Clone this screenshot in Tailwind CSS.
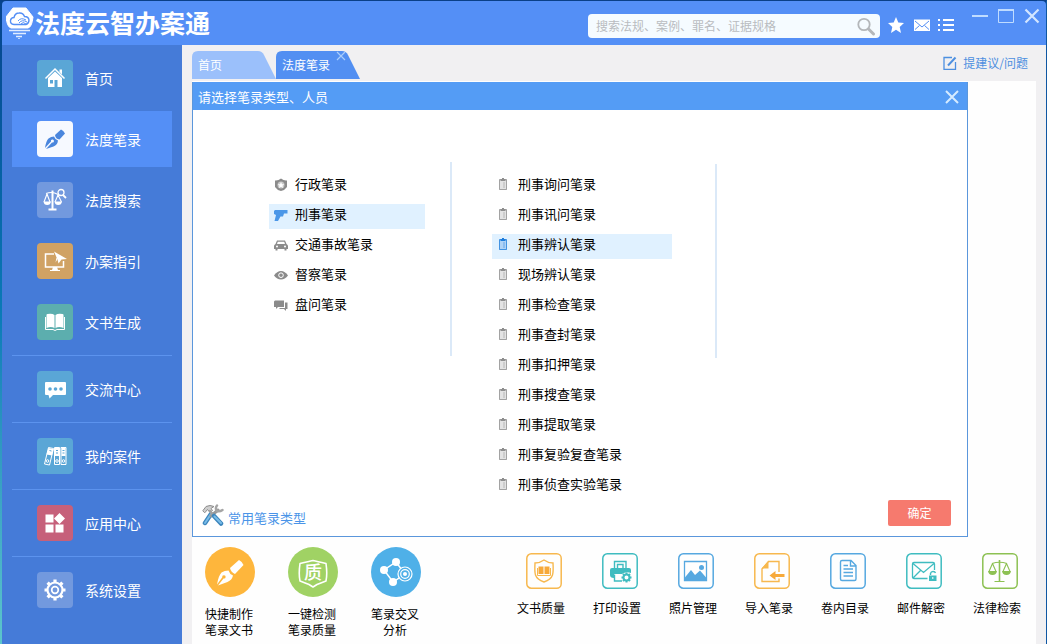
<!DOCTYPE html>
<html lang="zh-CN">
<head>
<meta charset="utf-8">
<meta name="viewport" content="width=device-width, initial-scale=1">
<title>法度云智办案通</title>
<script src="https://cdn.jsdelivr.net/npm/@tailwindcss/browser@4"></script>
</head>
<body class="min-h-screen bg-linear-to-b from-[#06428c] via-[#0b7cb8] to-[#5cc6cc] font-['Noto_Sans_CJK_SC',sans-serif] text-[13px] leading-4 text-black">
<svg class="hidden" aria-hidden="true">
  <symbol id="clipboard" viewBox="0 0 13 14">
    <path d="M2 2.500H10V13H2Z" fill="currentColor" fill-opacity=".25"/>
    <path d="M2.500 2.500H9.500V12.500H2.500Z" fill="none" stroke="currentColor" stroke-opacity=".75"/>
    <path d="M3.500 2H5V1H7V2H8.500V4H3.500Z" fill="currentColor"/>
    <path d="M6 6H8M6 8H8M6 10H8" stroke="currentColor" stroke-opacity=".5"/>
  </symbol>
</svg>
<div class="flex min-h-screen flex-col border-t border-r border-l-2 border-t-[#0a3f87] border-r-[#0f57a3] border-l-transparent bg-clip-padding">

  <!-- Title bar -->
  <header class="flex h-11 shrink-0 items-center rounded-t bg-[#548ff6] pr-1.5 pl-1 text-white">
    <svg class="h-8 w-7 shrink-0" viewBox="0 0 28 32" aria-hidden="true">
      <path d="M7 1H20L27 10Q26 20 22 21H5Q1 20 0 10Z" fill="#fff" stroke="#fff" stroke-linejoin="round"/>
      <path d="M8 17.500Q4 17 4.500 13.500Q5 10.500 8 10.500Q9 6 13 6Q17 5.500 18.500 9.500Q22.500 9.500 23 13Q23 16.500 20 17.500Z" fill="none" stroke="#548ff6" stroke-width="1.400"/>
      <path d="M12 14Q15 10 20 13M13 16Q16 12 21 15M15 17Q17 14 20 17" fill="none" stroke="#548ff6"/>
      <path d="M3 23.500H24M7 26.500H20M10 29.500H16" stroke="#e2edff" stroke-width="1.300"/>
      <path d="M12 31.500H14" stroke="#c0d7ff"/>
    </svg>
    <h1 class="pb-0.5 pl-px text-[25px] leading-8 font-bold whitespace-nowrap">法度云智办案通</h1>
    <form class="mt-1.5 ml-auto flex h-6 w-[292px] items-center rounded bg-[#f5fbff] pr-1 pl-2" role="search">
      <input type="text" aria-label="搜索" placeholder="搜索法规、案例、罪名、证据规格" class="min-w-0 flex-1 bg-transparent text-xs text-gray-700 outline-none placeholder:text-[#b9bcc0]">
      <button type="submit" aria-label="搜索" class="size-5">
        <svg viewBox="0 0 20 20" fill="none" stroke="#b4b7ba"><circle cx="8" cy="8.500" r="5.700" stroke-width="1.800"/><path d="M12.500 13L17.500 18" stroke-width="3" stroke-linecap="round"/></svg>
      </button>
    </form>
    <nav class="mt-1 ml-2 flex items-center gap-2" aria-label="快捷">
      <button type="button" aria-label="收藏"><svg class="size-4" viewBox="0 0 16 16" fill="#fff"><path d="M8 0L10.300 5.500L16 6L11.700 9.900L13 16L8 12.800L3 16L4.300 9.900L0 6L5.700 5.500Z"/></svg></button>
      <button type="button" aria-label="邮件" class="ml-0.5"><svg class="size-4" viewBox="0 0 16 16"><path d="M0 2.500H16V14H0Z" fill="#fff"/><path d="M1 4L8 10L15 4M1 12.500L5.500 8.500M15 12.500L10.500 8.500" fill="none" stroke="#548ff6"/></svg></button>
      <button type="button" aria-label="菜单"><svg class="size-4" viewBox="0 0 16 16" stroke="#fff" stroke-width="2"><path d="M0 3H2M0 8H2M0 13H2M5 3H16M5 8H16M5 13H16"/></svg></button>
    </nav>
    <div class="mb-3.5 ml-[18px] flex items-center gap-2.5">
      <button type="button" aria-label="最小化"><svg class="size-4" viewBox="0 0 16 16"><path d="M0 8H16" stroke="#c0dcff" stroke-width="2"/></svg></button>
      <button type="button" aria-label="最大化"><svg class="size-4" viewBox="0 0 16 16" fill="none" stroke="#c0dcff"><path d="M.5 1.500H15.500V14.500H.5Z"/><path d="M0 2H16" stroke-width="2"/></svg></button>
      <button type="button" aria-label="关闭"><svg class="size-4" viewBox="0 0 16 16" stroke="#d3e6ff" stroke-width="2.200"><path d="M1.500 1.500L14.500 14.500M14.500 1.500L1.500 14.500"/></svg></button>
    </div>
  </header>

  <div class="flex flex-1">
    <!-- Sidebar -->
    <nav class="flex w-[180px] shrink-0 flex-col gap-[5px] bg-[#457bd8] px-2.5 pt-[5px] text-sm text-white" aria-label="主导航">
      <a href="#" class="flex h-14 items-center gap-3 pl-[25px]">
        <span class="grid size-9 place-items-center rounded bg-[#5aa6d6]"><svg class="size-6" viewBox="0 0 24 24"><path d="M5 12L12 5.500L19 12V21H14.500V14H11.500V21H5Z" fill="#fff"/><path d="M2.500 12.500L12 3L21.500 12.500" fill="none" stroke="#fff" stroke-width="1.500"/><path d="M16.500 3.500H19V8.500L16.500 6Z" fill="#fff"/><path d="M7 14H10V17.500H7Z" fill="#5aa6d6"/></svg></span>首页</a>
      <a href="#" aria-current="page" class="flex h-14 items-center gap-3 bg-[#548ff6] pl-[25px]">
        <span class="grid size-9 place-items-center rounded bg-[#f6f9ff]"><svg class="size-6" viewBox="0 0 24 24" fill="#4a86dd"><path d="M12 8L18 2.500Q20.500 3.500 22 6.500L16.500 12.500Q12.500 12 12 8Z"/><path d="M11 9.500Q12 12.500 15 13.500Q14.500 18 10.500 19.500L3 22L9 15.500A1.500 1.500 0 1 0 8 14.500L2 21Q3 14 5.500 11.500Q8 9.500 11 9.500Z"/></svg></span>法度笔录</a>
      <a href="#" class="flex h-14 items-center gap-3 pl-[25px]">
        <span class="grid size-9 place-items-center rounded bg-[#7299de]"><svg class="size-6" viewBox="0 0 24 24" fill="none" stroke="#fff"><path d="M9.500 2.500V21" stroke-width="2"/><path d="M3 5.500Q9.500 3 15 6.500M4 6L1 14M4 6L7 14M15 7L12 14M15 7L18.500 14" stroke-width="1.100"/><path d="M.5 13.500H8Q7.500 17 4.200 17Q1 17 .5 13.500ZM11.500 13.500H19Q18.500 17 15.200 17Q12 17 11.500 13.500ZM5.500 20.500H13.500V22.500H5.500Z" fill="#fff" stroke="none"/><circle cx="18" cy="4.500" r="3" stroke-width="1.300"/><path d="M20 7L23 10" stroke-width="1.800"/></svg></span>法度搜索</a>
      <a href="#" class="flex h-14 items-center gap-3 pl-[25px]">
        <span class="grid size-9 place-items-center rounded bg-[#d0a264]"><svg class="size-6" viewBox="0 0 24 24"><path d="M11 5H2.500V18H20.500V12" fill="none" stroke="#fff" stroke-width="1.500"/><path d="M10 18H14L15 21H17V22H7V21H9Z" fill="#fff"/><path d="M11 2.500L24 10L18.500 10.500L15.500 14.500L14.500 10.500Z" fill="#fff"/><path d="M14.500 10L12.500 13.500L13.500 8.500" fill="#fff"/></svg></span>办案指引</a>
      <a href="#" class="flex h-14 items-center gap-3 pl-[25px]">
        <span class="grid size-9 place-items-center rounded bg-[#5caeae]"><svg class="size-6" viewBox="0 0 24 24" fill="#fff"><path d="M4.500 4Q9 3 11.500 5V18Q8 16 3.500 18V5Q3.500 4 4.500 4ZM19.500 4Q15 3 12.500 5V18Q16 16 20.500 18V5Q20.500 4 19.500 4Z"/><path d="M2.500 7V19.500H10Q12 21.500 14 19.500H21.500V7" fill="none" stroke="#fff"/></svg></span>文书生成</a>
      <hr class="border-[#5c93ee]">
      <a href="#" class="flex h-14 items-center gap-3 pl-[25px]">
        <span class="grid size-9 place-items-center rounded bg-[#5aa6d6]"><svg class="size-6" viewBox="0 0 24 24"><path d="M3 5H22Q23 5 23 6V17Q23 18 22 18H10L6.500 21.500L5.500 18H3Q2 18 2 17V6Q2 5 3 5Z" fill="#fff"/><g fill="#5aa6d6"><circle cx="7" cy="12" r="1.800"/><circle cx="12.500" cy="12" r="1.800"/><circle cx="18" cy="12" r="1.800"/></g></svg></span>交流中心</a>
      <hr class="border-[#5c93ee]">
      <a href="#" class="flex h-14 items-center gap-3 pl-[25px]">
        <span class="grid size-9 place-items-center rounded bg-[#5aa6d6]"><svg class="size-6" viewBox="0 0 24 24" fill="none" stroke="#fff"><path d="M5.500 3.500L10.500 4.500L6.500 21L1.500 20ZM11.500 3.500H16.500V20.500H11.500ZM18 3.500H23V20.500H18Z"/><path d="M5.500 4L10.500 5L9 11.500L3.500 10.500ZM12 4H16V12H12ZM18.500 4H22.500V12H18.500Z" fill="#fff" stroke="none"/><path d="M6.500 6.500L8.500 7M13 6.500H15M19.500 6.500H21.500M13 9H15M19.500 9H21.500" stroke="#5aa6d6"/><circle cx="4.500" cy="17" r="1.300"/><circle cx="14" cy="17" r="1.300"/><circle cx="20.500" cy="17" r="1.300"/></svg></span>我的案件</a>
      <hr class="border-[#5c93ee]">
      <a href="#" class="flex h-14 items-center gap-3 pl-[25px]">
        <span class="grid size-9 place-items-center rounded bg-[#c6607a]"><svg class="size-6" viewBox="0 0 24 24" fill="#fff"><path d="M2.500 3.500H10.500V11.500H2.500ZM2.500 13.500H10.500V21.500H2.500ZM12.500 13.500H20.500V21.500H12.500ZM16.500 2L22 7.500L16.500 13L11 7.500Z"/></svg></span>应用中心</a>
      <hr class="border-[#5c93ee]">
      <a href="#" class="flex h-14 items-center gap-3 pl-[25px]">
        <span class="grid size-9 place-items-center rounded bg-[#7299de]"><svg class="size-6" viewBox="0 0 24 24" fill="none" stroke="#fff"><circle cx="12" cy="12" r="7.500" stroke-width="2.200"/><circle cx="12" cy="12" r="3.300" stroke-width="1.700"/><path d="M12 1.500V4.500M12 19.500V22.500M1.500 12H4.500M19.500 12H22.500M4.600 4.600L6.500 6.500M17.500 17.500L19.400 19.400M4.600 19.400L6.500 17.500M17.500 6.500L19.400 4.600" stroke-width="3.200"/></svg></span>系统设置</a>
    </nav>

    <main class="flex min-w-0 flex-1 flex-col bg-[#f1f0f2] px-2.5 pt-1.5">
      <!-- Document tabs -->
      <div class="flex text-xs text-white">
        <a href="#" class="flex h-7 w-[84px] items-center bg-[#9bc0fb] pl-1.5 [clip-path:path('M0_6Q0_0_6_0H66Q70_0_72_4L84_28H0Z')]">首页</a>
        <div class="relative flex h-7 w-[84px] items-center bg-[#528ff2] pl-1.5 [clip-path:path('M0_6Q0_0_6_0H66Q70_0_72_4L84_28H0Z')]">
          <a href="#" aria-current="page">法度笔录</a>
          <button type="button" aria-label="关闭标签" class="absolute top-0 left-[60px]"><svg class="size-2.5" viewBox="0 0 10 10" stroke="#a9cdfb" stroke-width="1.200"><path d="M1 1L9 9M9 1L1 9"/></svg></button>
        </div>
        <a href="#" class="mr-2 ml-auto flex items-center gap-1.5 pb-1 text-[#4d8fe0]">
          <svg class="size-3.5" viewBox="0 0 14 14" fill="none" stroke="#4d8fe0"><path d="M12.500 6V13.300H1V1.500H9" stroke-width="1.300"/><path d="M5 9.500L12.500 1.500" stroke-width="2"/></svg>
          提建议/问题</a>
      </div>

      <div class="mt-0.5 flex flex-1 flex-col bg-[#fefefe] pt-px">
        <!-- Record type picker -->
        <section role="dialog" aria-labelledby="picker-title" class="mr-[68px] border border-t-0 border-[#5b97dc] bg-white">
          <div class="flex h-7 items-center justify-between bg-[#549cf5] pr-2 pl-[5px] text-white">
            <h2 id="picker-title" class="pt-px">请选择笔录类型、人员</h2>
            <button type="button" aria-label="关闭" class="pt-0.5"><svg class="size-3.5" viewBox="0 0 14 14" stroke="#d5ebff" stroke-width="2"><path d="M1 1L13 13M13 1L1 13"/></svg></button>
          </div>
          <div class="flex items-start pt-[52px] pl-[76px]">
            <ul class="flex w-[156px] flex-col gap-[5px] pt-3">
              <li><button type="button" class="flex h-[25px] w-full items-center gap-[7px] pb-1.5 pl-[5px]"><svg class="mt-0.5 size-3.5" viewBox="0 0 14 14"><path d="M1 2.500Q4 3 7 .5Q10 3 13 2.500V9Q11 12 7 13Q3 12 1 9Z" fill="#8b8b8b"/><circle cx="7" cy="7" r="3.500" fill="#c8c8c8"/><path d="M7 4L8 6.200L10.300 6.300L8.500 7.800L9 10L7 8.800L5 10L5.500 7.800L3.700 6.300L6 6.200Z" fill="#fff"/></svg>行政笔录</button></li>
              <li><button type="button" aria-pressed="true" class="flex h-[25px] w-full items-center gap-[7px] bg-[#e0f1ff] pb-1.5 pl-[5px]"><svg class="mt-0.5 size-3.5" viewBox="0 0 14 14" fill="#4b97e8"><path d="M0 3L1 2H13.500V5.500H10L9 8.500H6.500L4 13H.5L2 7L0 6Z"/></svg>刑事笔录</button></li>
              <li><button type="button" class="flex h-[25px] w-full items-center gap-[7px] pb-1.5 pl-[5px]"><svg class="mt-0.5 size-3.5" viewBox="0 0 14 14" fill="#8b8b8b"><path d="M3 2.500H11L12.500 6Q14 7 14 8V11H12.500V12.500H10.500V11H3.500V12.500H1.500V11H0V8Q0 7 1.500 6Z"/><path d="M3.800 3.700H10.200L11 6H3Z" fill="#fff"/><circle cx="3" cy="8.500" r="1" fill="#fff"/><circle cx="11" cy="8.500" r="1" fill="#fff"/></svg>交通事故笔录</button></li>
              <li><button type="button" class="flex h-[25px] w-full items-center gap-[7px] pb-1.5 pl-[5px]"><svg class="mt-0.5 size-3.5" viewBox="0 0 14 14"><path d="M0 7.500Q3 3 7 3Q11 3 14 7.500Q11 11.500 7 11.500Q3 11.500 0 7.500Z" fill="#8b8b8b"/><circle cx="7" cy="7.200" r="2.300" fill="none" stroke="#fff"/></svg>督察笔录</button></li>
              <li><button type="button" class="flex h-[25px] w-full items-center gap-[7px] pb-1.5 pl-[5px]"><svg class="mt-0.5 size-3.5" viewBox="0 0 14 14" fill="#8b8b8b"><path d="M1 2.500H10V9H4L2 11V9H0V3.500Z"/><path d="M11 4.500H13.500V11H12V13L10 11H5.500V10H11Z"/></svg>盘问笔录</button></li>
            </ul>
            <div class="ml-[25px] h-[194px] w-0.5 bg-[#dbe9f8]"></div>
            <ul class="ml-10 flex w-[180px] flex-col gap-[5px] pt-3 whitespace-nowrap">
              <li><button type="button" class="flex h-[25px] w-full items-center gap-2 pb-1.5 pl-[5px]"><svg class="h-3.5 w-[13px] text-[#8e8e8e]"><use href="#clipboard"/></svg>刑事询问笔录</button></li>
              <li><button type="button" class="flex h-[25px] w-full items-center gap-2 pb-1.5 pl-[5px]"><svg class="h-3.5 w-[13px] text-[#8e8e8e]"><use href="#clipboard"/></svg>刑事讯问笔录</button></li>
              <li><button type="button" aria-pressed="true" class="flex h-[25px] w-full items-center gap-2 bg-[#e0f1ff] pb-1.5 pl-[5px]"><svg class="h-3.5 w-[13px] text-[#1f7ddb]"><use href="#clipboard"/></svg>刑事辨认笔录</button></li>
              <li><button type="button" class="flex h-[25px] w-full items-center gap-2 pb-1.5 pl-[5px]"><svg class="h-3.5 w-[13px] text-[#8e8e8e]"><use href="#clipboard"/></svg>现场辨认笔录</button></li>
              <li><button type="button" class="flex h-[25px] w-full items-center gap-2 pb-1.5 pl-[5px]"><svg class="h-3.5 w-[13px] text-[#8e8e8e]"><use href="#clipboard"/></svg>刑事检查笔录</button></li>
              <li><button type="button" class="flex h-[25px] w-full items-center gap-2 pb-1.5 pl-[5px]"><svg class="h-3.5 w-[13px] text-[#8e8e8e]"><use href="#clipboard"/></svg>刑事查封笔录</button></li>
              <li><button type="button" class="flex h-[25px] w-full items-center gap-2 pb-1.5 pl-[5px]"><svg class="h-3.5 w-[13px] text-[#8e8e8e]"><use href="#clipboard"/></svg>刑事扣押笔录</button></li>
              <li><button type="button" class="flex h-[25px] w-full items-center gap-2 pb-1.5 pl-[5px]"><svg class="h-3.5 w-[13px] text-[#8e8e8e]"><use href="#clipboard"/></svg>刑事搜查笔录</button></li>
              <li><button type="button" class="flex h-[25px] w-full items-center gap-2 pb-1.5 pl-[5px]"><svg class="h-3.5 w-[13px] text-[#8e8e8e]"><use href="#clipboard"/></svg>刑事提取笔录</button></li>
              <li><button type="button" class="flex h-[25px] w-full items-center gap-2 pb-1.5 pl-[5px]"><svg class="h-3.5 w-[13px] text-[#8e8e8e]"><use href="#clipboard"/></svg>刑事复验复查笔录</button></li>
              <li><button type="button" class="flex h-[25px] w-full items-center gap-2 pb-1.5 pl-[5px]"><svg class="h-3.5 w-[13px] text-[#8e8e8e]"><use href="#clipboard"/></svg>刑事侦查实验笔录</button></li>
            </ul>
            <div class="mt-0.5 ml-[43px] h-[194px] w-0.5 bg-[#dbe9f8]"></div>
          </div>
          <div class="flex items-end justify-between pt-px pr-4 pb-2.5 pl-[9px]">
            <a href="#" class="flex items-center gap-1 text-[#4a94e8]">
              <svg class="size-[22px]" viewBox="0 0 22 22" fill="none" stroke-linecap="round"><path d="M9 10L3 19" stroke="#3d86bd" stroke-width="4.500"/><path d="M9 10L3 19" stroke="#79bce8" stroke-width="2"/><path d="M16 6L9 12" stroke="#9a9a9a" stroke-width="3"/><path d="M15 1.500Q13 4 14.500 6.500Q17 8.500 20.500 6" stroke="#a5a5a5" stroke-width="2.400"/><path d="M1 6.500L4 2.500Q8 .5 12 2.500L9 4.500L10.500 6.500L8 8.500L5.500 5.500L3 8.500Z" fill="#cfcfcf" stroke="#8e8e8e"/><path d="M8 7L12 12" stroke="#a0a0a0" stroke-width="2.500"/><path d="M12 12L19 19.500" stroke="#3d86bd" stroke-width="4.500"/><path d="M12.500 12.500L19 19" stroke="#79bce8" stroke-width="2"/></svg>
              <span class="pt-1.5">常用笔录类型</span></a>
            <button type="button" class="h-[26px] w-[63px] rounded-xs bg-[#f67a6e] text-xs text-white">确定</button>
          </div>
        </section>

        <!-- Shortcuts -->
        <div class="flex items-start justify-between pt-2.5 pr-[9px] pb-1.5 pl-[13px] text-xs">
          <div class="flex gap-[33px]">
            <a href="#" class="flex w-[50px] flex-col gap-[9px] leading-4">
              <svg class="size-[50px]" viewBox="0 0 50 50"><circle cx="25" cy="25" r="25" fill="#feb63c"/><g fill="#fff"><path d="M25 21L34 13Q37 14.500 38.500 18L30 27Q26 25.500 25 21Z"/><path d="M23.500 23.500Q24.500 27 28 28.500Q27 33 22.500 35L13 38.500L18.500 31.500A1.700 1.700 0 1 0 17.300 30.300L12 37.500Q13.500 28.500 16.500 25.500Q19.500 23.500 23.500 23.500Z"/></g></svg>
              <span class="w-12 text-center">快捷制作<br>笔录文书</span></a>
            <a href="#" class="flex w-[50px] flex-col gap-[9px] leading-4">
              <svg class="size-[50px]" viewBox="0 0 50 50"><circle cx="25" cy="25" r="25" fill="#a0d264"/><path d="M25 13.500Q29 14.500 38 16.500Q39.500 27 38 34L29 37.500L25 40L21 37.500L12 34Q10.500 27 12 16.500Q21 14.500 25 13.500Z" fill="none" stroke="#fff" stroke-width="1.600" stroke-linejoin="round"/><text x="25" y="32" font-size="18" text-anchor="middle" fill="#fff" font-weight="500">质</text></svg>
              <span class="w-12 text-center">一键检测<br>笔录质量</span></a>
            <a href="#" class="flex w-[50px] flex-col gap-[9px] leading-4">
              <svg class="size-[50px]" viewBox="0 0 50 50"><circle cx="25" cy="25" r="25" fill="#4fb0e8"/><path d="M34 27L25 15L13 23L22 35Z" fill="none" stroke="#fff" stroke-width="1.500"/><g fill="#fff"><circle cx="25" cy="15" r="4"/><circle cx="13" cy="23" r="4"/><circle cx="22" cy="35" r="4"/></g><circle cx="34" cy="27" r="7" fill="#4fb0e8" stroke="#fff" stroke-width="1.200"/><circle cx="34" cy="27" r="4.300" fill="none" stroke="#fff" stroke-width="1.200"/><circle cx="34" cy="27" r="2" fill="#fff"/></svg>
              <span class="w-12 text-center">笔录交叉<br>分析</span></a>
          </div>
          <div class="flex gap-[22px] pt-1.5">
            <a href="#" class="flex w-[54px] flex-col gap-[11px]">
              <svg class="size-9 self-center" viewBox="0 0 36 36" fill="none" stroke="#f7b84e"><rect x=".8" y=".8" width="34.400" height="34.400" rx="4.500" stroke-width="1.500"/><path d="M18 7Q22 10 27 10Q27.500 19 26.500 22Q25 26.500 18 29Q11 26.500 9.500 22Q8.500 19 9 10Q14 10 18 7Z" stroke-width="1.400"/><path d="M12.500 13.500H17.500V21H12.500ZM18.500 13.500H23.500V21H18.500Z" fill="#f7a93a" stroke="none"/><path d="M11.500 15V22.500H24.500V15"/></svg>
              文书质量</a>
            <a href="#" class="flex w-[54px] flex-col gap-[11px]">
              <svg class="size-9 self-center" viewBox="0 0 36 36" fill="none" stroke="#3fbcc0"><rect x=".8" y=".8" width="34.400" height="34.400" rx="4.500" stroke-width="1.500"/><path d="M12.500 15V8.500H24V15M15.500 15V11.500H21V15" stroke-width="1.400"/><path d="M10 15H27Q29 15 29 17V20Q24 18 20 21H12V25Q8 25 8 22V17Q8 15 10 15Z" fill="#3fbcc0" stroke="none"/><path d="M12.500 21.500V28H20" stroke-width="1.400"/><circle cx="24.500" cy="24.500" r="3" stroke-width="2"/><path d="M24.500 19.500V21M24.500 28V29.500M19.500 24.500H21M28 24.500H29.500M21 21L22 22M27 27L28 28M21 28L22 27M27 22L28 21" stroke-width="2"/></svg>
              打印设置</a>
            <a href="#" class="flex w-[54px] flex-col gap-[11px]">
              <svg class="size-9 self-center" viewBox="0 0 36 36" fill="none" stroke="#56a8e0"><rect x=".8" y=".8" width="34.400" height="34.400" rx="4.500" stroke-width="1.500"/><path d="M6.500 8.500H28.500V27.500H6.500Z" stroke-width="1.300"/><path d="M6.500 25L13 17L17 22L22 17.500L28.500 25V27.500H6.500Z" fill="#56a8e0" stroke="none"/><circle cx="23.500" cy="14.500" r="2.500" fill="#56a8e0" stroke="none"/></svg>
              照片管理</a>
            <a href="#" class="flex w-[54px] flex-col gap-[11px]">
              <svg class="size-9 self-center" viewBox="0 0 36 36" fill="none" stroke="#f7b84e"><rect x=".8" y=".8" width="34.400" height="34.400" rx="4.500" stroke-width="1.500"/><path d="M25 19V8.500H14.500L8 16V28.500H25V25.500" stroke-width="1.400"/><path d="M7.500 15.500L14.500 8V15.500Z" fill="#f7b84e" stroke="none"/><path d="M15.500 22.500L21.500 18V21H30.500V24H21.500V27Z" fill="#f7a93a" stroke="none"/></svg>
              导入笔录</a>
            <a href="#" class="flex w-[54px] flex-col gap-[11px]">
              <svg class="size-9 self-center" viewBox="0 0 36 36" fill="none" stroke="#56a8e0"><rect x=".8" y=".8" width="34.400" height="34.400" rx="4.500" stroke-width="1.500"/><path d="M12 7.500H21L26 12.500V26Q26 27.500 24.500 27.500H12Q10.500 27.500 10.500 26V9Q10.500 7.500 12 7.500ZM20.500 8V13H25.500" stroke-width="1.400"/><path d="M13.500 12.500H18M13.500 16H23M13.500 19.500H23M13.500 23H23" stroke-width="1.400"/></svg>
              卷内目录</a>
            <a href="#" class="flex w-[54px] flex-col gap-[11px]">
              <svg class="size-9 self-center" viewBox="0 0 36 36" fill="none" stroke="#3fbcc0"><rect x=".8" y=".8" width="34.400" height="34.400" rx="4.500" stroke-width="1.500"/><path d="M21.500 25.500H8Q6.500 25.500 6.500 24V11Q6.500 9.500 8 9.500H27Q28.500 9.500 28.500 11V17M7 10.500L17.500 19.500L28 10.500M7 25L14.500 17.500" stroke-width="1.300"/><path d="M23 22.500H30.500V28H23Z" fill="#3fbcc0" stroke="none"/><path d="M24.500 22V20.500Q25 18.500 27 18.500Q29 18.500 29.500 20" stroke-width="1.400"/><path d="M26.800 24V26" stroke="#fff"/></svg>
              邮件解密</a>
            <a href="#" class="flex w-[54px] flex-col gap-[11px]">
              <svg class="size-9 self-center" viewBox="0 0 36 36" fill="none" stroke="#8dc153"><rect x=".8" y=".8" width="34.400" height="34.400" rx="4.500" stroke-width="1.500"/><path d="M17.500 7V28" stroke-width="1.600"/><path d="M10 10.500Q17.500 8 25 10.500M10.500 10.500L7 18.500M10.500 10.500L14 18.500M24.500 10.500L21 18.500M24.500 10.500L28 18.500M12.500 28.500H22.500" stroke-width="1.100"/><path d="M6 18H15Q14.500 22 10.500 22Q6.500 22 6 18ZM20 18H29Q28.500 22 24.500 22Q20.500 22 20 18Z" fill="#8dc153" stroke="none"/></svg>
              法律检索</a>
          </div>
        </div>
      </div>
    </main>
  </div>
</div>
</body>
</html>
